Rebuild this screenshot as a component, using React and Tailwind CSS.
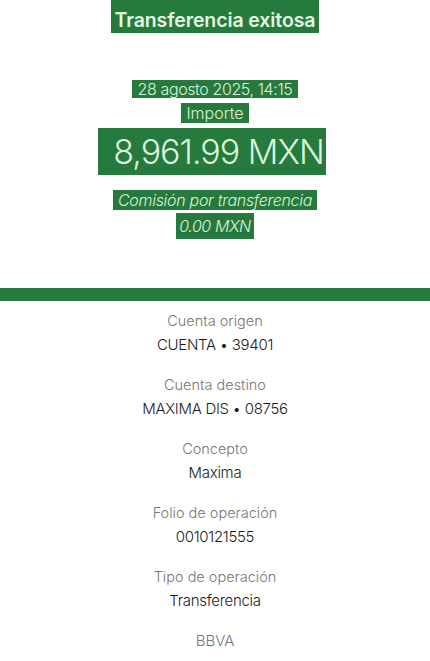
export default function App() {
  const rows = [
    ["Cuenta origen", "CUENTA • 39401"],
    ["Cuenta destino", "MAXIMA DIS • 08756"],
    ["Concepto", "Maxima"],
    ["Folio de operación", "0010121555"],
    ["Tipo de operación", "Transferencia"],
  ];

  return (
    <div className="w-[430px] h-[661px] overflow-hidden bg-white font-['Inter',sans-serif] text-center">
      {/* Header (only text blocks carry the green) */}
      <div className="flex flex-col items-center">
        <span className="bg-[#277a3e] text-[#e2f7e2] text-[19.5px] font-semibold leading-[24px] px-[4px] pt-[8px] pb-[1px] tracking-[-0.1px]">
          Transferencia exitosa
        </span>

        <span className="mt-[47px] bg-[#277a3e] text-[#d9f3d9] text-[16px] font-light leading-[18px] px-[6px] tracking-[-0.4px]">
          28 agosto 2025, 14:15
        </span>
        <span className="mt-[5px] bg-[#277a3e] text-[#d9f3d9] text-[16px] font-light leading-[20px] px-[5px]">
          Importe
        </span>
        <span className="mt-[5px] bg-[#277a3e] text-[#dcf5dc] text-[34px] font-light leading-[47px] pl-[15px] pr-[2px] tracking-[-1px] ml-[-6px]">
          8,961.99 MXN
        </span>

        <span className="mt-[15px] bg-[#277a3e] text-[#d9f3d9] text-[16px] font-light italic leading-[20px] px-[5px] tracking-[-0.3px]">
          Comisión por transferencia
        </span>
        <span className="mt-[3px] bg-[#277a3e] text-[#d9f3d9] text-[16px] font-light italic leading-[26px] px-[3px] tracking-[-0.4px]">
          0.00 MXN
        </span>
      </div>

      <div className="mt-[49px] h-[13px] bg-[#277a3e]" />

      {/* Details */}
      <div className="flex flex-col items-center pt-[10px]">
        {rows.map(([label, value]) => (
          <div key={label} className="h-[64px] flex flex-col items-center">
            <span className="text-[14.5px] leading-[20px] font-light text-[#767676]">{label}</span>
            <span className="mt-[4px] text-[15px] leading-[20px] font-[350] text-[#1c1c1c] tracking-[-0.3px]">{value}</span>
          </div>
        ))}
        <span className="text-[15px] leading-[20px] font-light text-[#777]">BBVA</span>
      </div>
    </div>
  );
}
